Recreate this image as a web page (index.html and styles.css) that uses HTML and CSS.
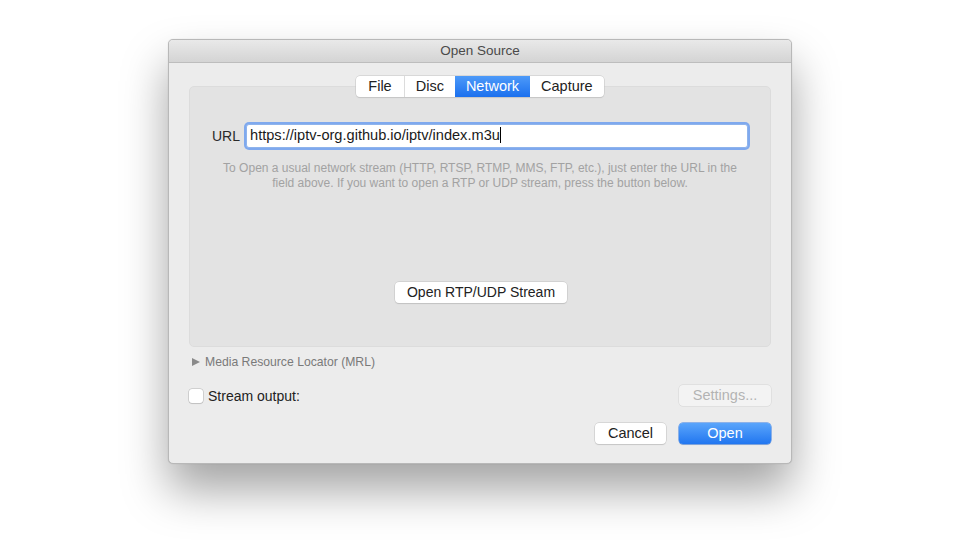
FILE: index.html
```html
<!DOCTYPE html>
<html lang="en">
<head>
  <meta charset="UTF-8" />
  <meta name="viewport" content="width=960, height=540, initial-scale=1.0" />
  <title>Open Source</title>
  <link rel="stylesheet" href="styles.css">
</head>
<body>
  <div class="window">
    <div class="titlebar">Open Source</div>

    <div class="content">
      <div class="tabs">
        <span class="tab">File</span>
        <span class="tab">Disc</span>
        <span class="tab active">Network</span>
        <span class="tab">Capture</span>
      </div>

      <div class="group">
        <div class="url-row">
          <label class="url-label">URL</label>
          <div class="url-field">https://iptv-org.github.io/iptv/index.m3u<span class="caret"></span></div>
        </div>
        <p class="help">
          To Open a usual network stream (HTTP, RTSP, RTMP, MMS, FTP, etc.), just enter the URL in the<br>
          field above. If you want to open a RTP or UDP stream, press the button below.
        </p>
        <div class="spacer"></div>
        <button class="btn rtp">Open RTP/UDP Stream</button>
      </div>

      <div class="mrl">
        <span class="triangle"></span>
        <span>Media Resource Locator (MRL)</span>
      </div>

      <div class="output-row">
        <label class="check">
          <span class="box"></span>
          <span>Stream output:</span>
        </label>
        <button class="btn wide disabled">Settings...</button>
      </div>

      <div class="actions">
        <button class="btn cancel">Cancel</button>
        <button class="btn wide primary">Open</button>
      </div>
    </div>
  </div>
</body>
</html>
```

FILE: styles.css
```css
html, body {
  margin: 0;
  padding: 0;
  width: 100%;
  height: 100%;
  background: #ffffff;
  font-family: 'Liberation Sans', Arial, sans-serif;
  color: #262626;
}

body {
  display: flex;
  flex-direction: column;
  align-items: center;
  padding-top: 39px;
  box-sizing: border-box;
}

.window {
  width: 624px;
  height: 425px;
  background: #ececec;
  border: 1px solid #b8b8b8;
  border-radius: 5px;
  box-shadow: 0 26px 46px rgba(0, 0, 0, 0.36), 0 0 1px rgba(0, 0, 0, 0.2);
  box-sizing: border-box;
  display: flex;
  flex-direction: column;
  overflow: hidden;
}

.titlebar {
  height: 22px;
  flex: none;
  background: linear-gradient(#e9e9e9, #d4d4d4);
  border-bottom: 1px solid #bdbdbd;
  text-align: center;
  font-size: 13.5px;
  line-height: 22px;
  color: #4a4a4a;
}

.content {
  flex: 1;
  display: flex;
  flex-direction: column;
  padding: 13px 20px 0 20px;
}

/* segmented control */
.tabs {
  align-self: center;
  display: flex;
  height: 21px;
  background: #ffffff;
  border-radius: 4px;
  box-shadow: 0 0 0 0.5px #c4c4c4, 0 1px 1px rgba(0, 0, 0, 0.12);
  position: relative;
  z-index: 1;
}

.tab {
  font-size: 14.5px;
  line-height: 21px;
  padding: 0 11px;
  border-left: 1px solid #dcdcdc;
  color: #222;
}

.tab:first-child {
  border-left: none;
  padding: 0 12px;
  border-radius: 4px 0 0 4px;
}

.tab:last-child {
  border-radius: 0 4px 4px 0;
}

.tab.active {
  background: linear-gradient(#4d9af9, #1b70ee);
  color: #ffffff;
  border-left: none;
}

.tab.active + .tab {
  border-left: none;
}

.group {
  margin-top: -11px;
  height: 261px;
  box-sizing: border-box;
  background: #e3e3e3;
  border: 1px solid #dcdcdc;
  border-radius: 5px;
  display: flex;
  flex-direction: column;
  align-items: center;
  padding: 37px 22px 43px 22px;
}

.url-row {
  width: 100%;
  display: flex;
  align-items: center;
  gap: 5px;
}

.url-label {
  font-size: 14px;
  color: #2a2a2a;
}

.url-field {
  flex: 1;
  height: 24px;
  box-sizing: border-box;
  background: #ffffff;
  border: 1px solid #8fb4ec;
  box-shadow: 0 0 0 2px #7fa9ee;
  border-radius: 3px;
  font-size: 14.6px;
  line-height: 21px;
  padding: 0 3px;
  margin-left: 1px;
  color: #1a1a1a;
  white-space: nowrap;
}

.caret {
  display: inline-block;
  width: 1px;
  height: 16px;
  background: #000;
  vertical-align: -3px;
}

.help {
  margin: 13px 0 0 0;
  text-align: center;
  font-size: 12px;
  line-height: 15px;
  color: #a2a2a2;
}

.spacer {
  flex: 1;
}

.btn {
  font-family: inherit;
  font-size: 14.5px;
  height: 21px;
  line-height: 19px;
  padding: 0 8px;
  box-sizing: border-box;
  white-space: nowrap;
  background: #ffffff;
  color: #222;
  border: none;
  border-radius: 4px;
  box-shadow: 0 0 0 0.5px #c2c2c2, 0 1px 1px rgba(0, 0, 0, 0.14);
}

.rtp {
  width: 172px;
  margin-left: 2px;
  font-size: 14px;
}

.mrl {
  display: flex;
  align-items: center;
  gap: 5px;
  margin-top: 7px;
  padding-left: 3px;
  font-size: 12.2px;
  line-height: 16px;
  color: #7a7a7a;
}

.triangle {
  width: 0;
  height: 0;
  border-top: 4.5px solid transparent;
  border-bottom: 4.5px solid transparent;
  border-left: 8px solid #8a8a8a;
}

.output-row {
  display: flex;
  justify-content: space-between;
  align-items: center;
  margin-top: 15px;
}

.check {
  display: flex;
  align-items: center;
  gap: 5px;
  font-size: 14px;
  color: #222;
}

.box {
  width: 14px;
  height: 14px;
  background: #ffffff;
  border-radius: 3px;
  box-shadow: 0 0 0 0.5px #b4b4b4, 0 1px 1px rgba(0, 0, 0, 0.12);
}

.wide {
  width: 92px;
}

.disabled {
  background: #f3f3f3;
  color: #b3b3b3;
  box-shadow: 0 0 0 0.5px #d3d3d3;
}

.actions {
  display: flex;
  justify-content: flex-end;
  gap: 13px;
  margin-top: 17px;
}

.cancel {
  width: 71px;
}

.primary {
  background: linear-gradient(#5aa5fb, #2176f0);
  color: #ffffff;
  box-shadow: 0 0 0 0.5px #2f78e6, 0 1px 1px rgba(0, 0, 0, 0.14);
}
```
